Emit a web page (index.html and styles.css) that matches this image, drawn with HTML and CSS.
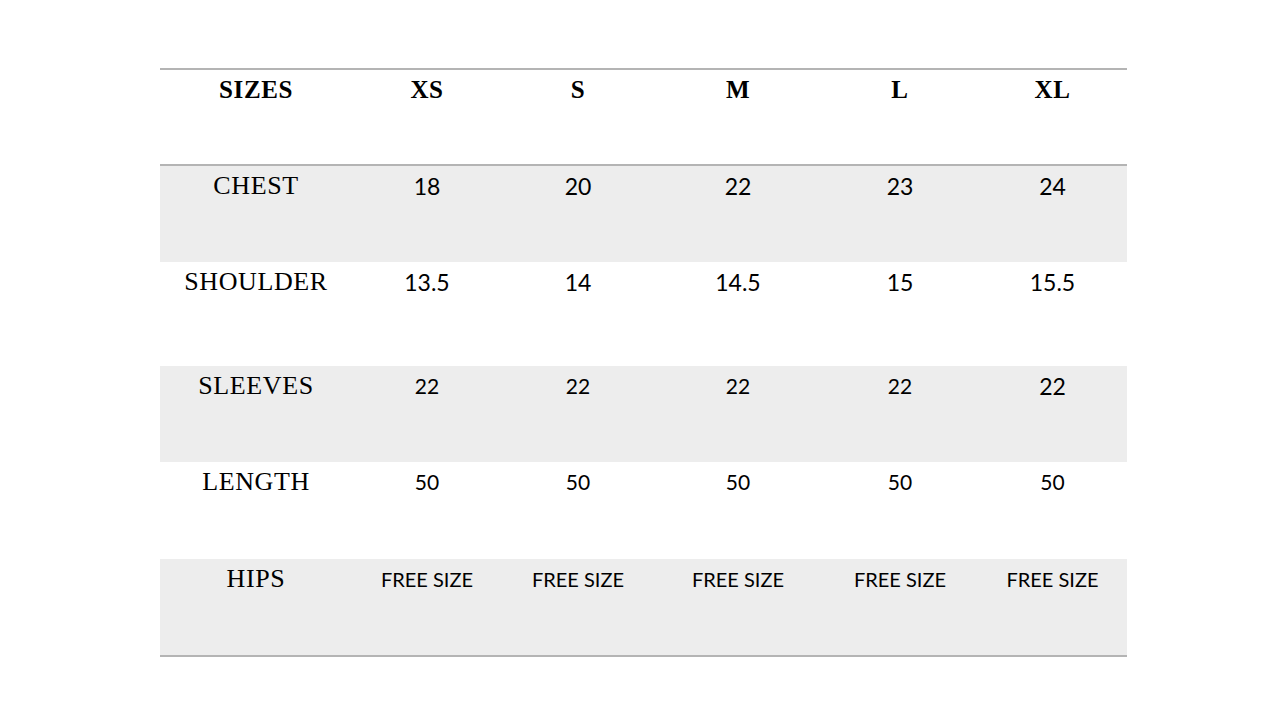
FILE: index.html
```html
<!DOCTYPE html>
<html>
<head>
<meta charset="utf-8">
<link rel="stylesheet" href="styles.css">
</head>
<body>
<div class="sheet">
  <div class="row head">
    <div class="cell label">SIZES</div>
    <div class="cell">XS</div>
    <div class="cell">S</div>
    <div class="cell">M</div>
    <div class="cell">L</div>
    <div class="cell">XL</div>
  </div>
  <div class="row shade r1">
    <div class="cell label">CHEST</div>
    <div class="cell num">18</div>
    <div class="cell num">20</div>
    <div class="cell num">22</div>
    <div class="cell num">23</div>
    <div class="cell num">24</div>
  </div>
  <div class="row r2">
    <div class="cell label">SHOULDER</div>
    <div class="cell num">13.5</div>
    <div class="cell num">14</div>
    <div class="cell num">14.5</div>
    <div class="cell num">15</div>
    <div class="cell num">15.5</div>
  </div>
  <div class="row shade r3">
    <div class="cell label">SLEEVES</div>
    <div class="cell num sm">22</div>
    <div class="cell num sm">22</div>
    <div class="cell num sm">22</div>
    <div class="cell num sm">22</div>
    <div class="cell num">22</div>
  </div>
  <div class="row r4">
    <div class="cell label">LENGTH</div>
    <div class="cell num sm">50</div>
    <div class="cell num sm">50</div>
    <div class="cell num sm">50</div>
    <div class="cell num sm">50</div>
    <div class="cell num sm">50</div>
  </div>
  <div class="row shade r5 last">
    <div class="cell label">HIPS</div>
    <div class="cell num fs">FREE SIZE</div>
    <div class="cell num fs">FREE SIZE</div>
    <div class="cell num fs">FREE SIZE</div>
    <div class="cell num fs">FREE SIZE</div>
    <div class="cell num fs">FREE SIZE</div>
  </div>
</div>
</body>
</html>
```
FILE: styles.css
```css
html, body {
  margin: 0;
  padding: 0;
  background: #ffffff;
}
body {
  width: 1280px;
  height: 720px;
  overflow: hidden;
  color: #000;
}
.sheet {
  margin: 68px 0 0 160px;
  width: 967px;
  display: flex;
  flex-direction: column;
  border-top: 2px solid #b4b4b4;
  border-bottom: 2px solid #b4b4b4;
}
.row {
  display: grid;
  grid-template-columns: 192px 150px 152px 168px 156px 149px;
  height: 97px;
}
.row.head {
  height: 94px;
  border-bottom: 2px solid #b4b4b4;
}
.row.r1 { height: 96px; }
.row.r2 { height: 104px; }
.row.r3 { height: 96px; }
.row.r5 { height: 96px; }
.row.shade { background: #ededed; }
.cell {
  text-align: center;
  font-family: "Lato", "Open Sans", sans-serif;
  font-size: 23px;
  line-height: 30px;
  padding-top: 5px;
}
.head .cell {
  font-family: "Liberation Serif", serif;
  font-weight: bold;
  font-size: 25px;
  letter-spacing: 0.6px;
  padding-top: 5px;
}
.label {
  font-family: "Liberation Serif", serif;
  font-size: 26px;
  letter-spacing: 0.6px;
  padding-top: 5px;
}
.num.sm { font-size: 21px; }
.num.fs { font-size: 20px; }
```
